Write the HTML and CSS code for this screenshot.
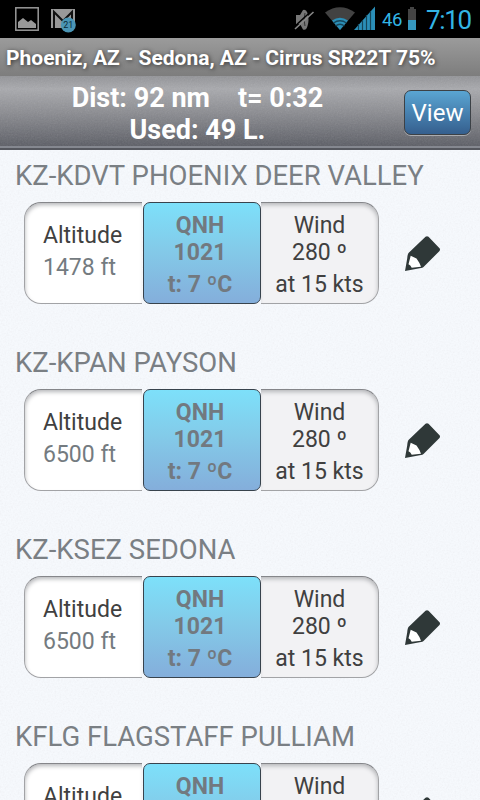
FILE: index.html
```html
<!DOCTYPE html>
<html lang="en">
<head>
    <meta charset="UTF-8">
    <meta name="viewport" content="width=device-width, initial-scale=1.0">
    <title>Flight plan weather</title>
    <link rel="stylesheet" href="styles.css">
</head>
<body>
    <svg class="symbols">
        <symbol id="pencil" viewBox="0 0 36 36">
            <path d="M20.500 .8Q22 -.3 23.500 .8L34.500 12.300Q35.500 13.500 34.500 15L18.500 31Q17.500 32 16 32L0 35 2.200 22.500Q2.500 17.500 4 16.500Z" fill="#2f3838"/>
            <path d="M5.700 19.700L11.500 22.500Q14.500 26.500 16 30.700L6.700 31.700Q5.500 29.200 3.500 28.300Z" fill="#fff"/>
        </symbol>
    </svg>

    <div class="status-bar">
        <svg class="notifications" width="90" height="38" viewBox="0 0 90 38">
            <rect x="15.8" y="7.8" width="22.4" height="22.4" fill="none" stroke="#999" stroke-width="1.5"/>
            <path d="M18 28V22L23 18 28 22 31 20 36 24V28Z" fill="#999"/>
            <rect x="51" y="9" width="24" height="19" fill="#999"/>
            <path d="M54 28V12L63 21 72 12V28" fill="none" stroke="#111" stroke-width="2"/>
            <circle cx="68.3" cy="25" r="7.5" fill="#4a95b5"/>
            <text x="68.3" y="28.2" class="mail-count">21</text>
        </svg>
        <svg class="indicators" width="90" height="38" viewBox="290 0 90 38">
            <path d="M296 15H300L303 10Q306 9 307.500 13Q309.500 20 307.500 26Q306 31 303 29.500L300 24H296Z" fill="#777"/>
            <path d="M305 13Q303 19.500 305 26" fill="none" stroke="#333" stroke-width="1"/>
            <path d="M294 27L312 10.500" stroke="#000" stroke-width="1.5"/>
            <path d="M295 29L313.500 12" stroke="#888" stroke-width="1.600"/>
            <path d="M325 12.500Q340 2 355 12.500L340 30Z" fill="#424242"/>
            <path d="M332 20.500Q340 15 348 20.500L340 30Z" fill="#2b8fb8"/>
            <path d="M333.500 23Q340 18.500 346.500 23M335.500 26Q340 22.500 344.500 26" fill="none" stroke="#16455a" stroke-width="1.300"/>
            <path d="M354 30L375 6.500V30Z" fill="#2b8fb8"/>
            <path d="M358.500 24V30M362.500 20V30M366.500 15V30M370.500 11V30" stroke="#15465a" stroke-width="1.200"/>
        </svg>
        <span class="battery-level">46</span>
        <svg class="battery" width="8" height="23" viewBox="0 0 8 23">
            <path d="M2 0H6V2H8V23H0V2H2Z" fill="#444"/>
            <path d="M0 13H8V23H0Z" fill="#3597be"/>
        </svg>
        <span class="clock">7:10</span>
    </div>

    <div class="title-bar"><span>Phoeniz, AZ - Sedona, AZ - Cirrus SR22T 75%</span></div>

    <div class="summary">
        <div class="totals">
            <div class="distance"><span>Dist: 92 nm</span><span>t= 0:32</span></div>
            <div class="fuel">Used: 49 L.</div>
        </div>
        <button class="view-btn">View</button>
    </div>

    <div class="waypoints">
        <div class="waypoint">
            <h2>KZ-KDVT PHOENIX DEER VALLEY</h2>
            <div class="row">
                <div class="card">
                    <div class="altitude">Altitude<span>1478 ft</span></div>
                    <div class="qnh">QNH<br>1021<span>t: 7 ºC</span></div>
                    <div class="wind">Wind<br>280 º<span>at 15 kts</span></div>
                </div>
                <svg class="edit"><use href="#pencil"/></svg>
            </div>
        </div>
        <div class="waypoint">
            <h2>KZ-KPAN PAYSON</h2>
            <div class="row">
                <div class="card">
                    <div class="altitude">Altitude<span>6500 ft</span></div>
                    <div class="qnh">QNH<br>1021<span>t: 7 ºC</span></div>
                    <div class="wind">Wind<br>280 º<span>at 15 kts</span></div>
                </div>
                <svg class="edit"><use href="#pencil"/></svg>
            </div>
        </div>
        <div class="waypoint">
            <h2>KZ-KSEZ SEDONA</h2>
            <div class="row">
                <div class="card">
                    <div class="altitude">Altitude<span>6500 ft</span></div>
                    <div class="qnh">QNH<br>1021<span>t: 7 ºC</span></div>
                    <div class="wind">Wind<br>280 º<span>at 15 kts</span></div>
                </div>
                <svg class="edit"><use href="#pencil"/></svg>
            </div>
        </div>
        <div class="waypoint">
            <h2>KFLG FLAGSTAFF PULLIAM</h2>
            <div class="row">
                <div class="card">
                    <div class="altitude">Altitude</div>
                    <div class="qnh">QNH</div>
                    <div class="wind">Wind</div>
                </div>
                <svg class="edit"><use href="#pencil"/></svg>
            </div>
        </div>
    </div>
</body>
</html>
```
FILE: styles.css
```css
* {
    box-sizing: border-box;
}
body {
    margin: 0;
    height: 800px;
    overflow: hidden;
    display: flex;
    flex-direction: column;
    font-family: Roboto, "Liberation Sans", sans-serif;
    background-color: #f2f5fa;
}
.symbols {
    position: absolute;
    width: 0;
    height: 0;
}
.status-bar {
    flex: none;
    height: 38px;
    display: flex;
    align-items: center;
    background: #000;
    color: #33b5e5;
}
.mail-count {
    font-size: 9px;
    text-anchor: middle;
    fill: #0b2a38;
}
.indicators {
    margin-left: auto;
}
.battery-level {
    width: 26px;
    margin-left: 2px;
    padding-top: 1px;
    font-size: 18.5px;
    letter-spacing: -0.5px;
}
.battery {
    margin: 0 10px 1px 0;
}
.clock {
    width: 54px;
    padding-top: 2px;
    font-size: 26px;
    letter-spacing: -1.3px;
}
.title-bar {
    flex: none;
    height: 38px;
    padding-left: 6px;
    line-height: 40px;
    font-size: 21px;
    font-weight: 700;
    color: #fff;
    white-space: nowrap;
    text-shadow: 1px 1px 4px #333;
    background: linear-gradient(#9b9b9b, #7d7d7d);
}
.summary {
    flex: none;
    height: 74px;
    display: flex;
    border-bottom: 2px solid #55575e;
    box-shadow: inset 0 -2px 0 #858890;
    background:
        url("data:image/svg+xml,%3Csvg xmlns='http://www.w3.org/2000/svg' width='100' height='100'%3E%3Cfilter id='n'%3E%3CfeTurbulence type='fractalNoise' baseFrequency='.7' numOctaves='2' stitchTiles='stitch'/%3E%3CfeColorMatrix type='saturate' values='0'/%3E%3C/filter%3E%3Crect width='100' height='100' filter='url(%23n)' opacity='.16'/%3E%3C/svg%3E"),
        linear-gradient(#929397 0, #a8a9ad 18%, #8b8c91 50%, #585a62 100%);
}
.totals {
    width: 395px;
    padding-top: 6px;
    font-size: 27px;
    font-weight: 700;
    line-height: 32px;
    color: #fff;
    text-align: center;
}
.distance {
    display: flex;
    justify-content: center;
    gap: 28px;
}
.view-btn {
    width: 67px;
    height: 45px;
    margin: 14px 0 0 9px;
    padding: 0;
    border: 1px solid #3c4146;
    border-radius: 7px;
    font-family: inherit;
    font-size: 24px;
    color: #fff;
    background: linear-gradient(#5aa5d3, #355f8e);
    box-shadow: 0 1px 0 #aaacb0;
}
.waypoints {
    flex: 1;
    overflow: hidden;
    background:
        url("data:image/svg+xml,%3Csvg xmlns='http://www.w3.org/2000/svg' width='100' height='100'%3E%3Cfilter id='n'%3E%3CfeTurbulence type='fractalNoise' baseFrequency='.6' numOctaves='2' stitchTiles='stitch'/%3E%3CfeColorMatrix type='saturate' values='0'/%3E%3C/filter%3E%3Crect width='100' height='100' filter='url(%23n)' opacity='.12'/%3E%3C/svg%3E"),
        #f8fbff;
}
.waypoint {
    height: 187px;
    padding-top: 8px;
}
.waypoint h2 {
    margin: 0 0 8px 15px;
    font-size: 27.5px;
    font-weight: 400;
    line-height: 36px;
    color: #7a7f84;
    white-space: nowrap;
}
.row {
    display: flex;
    align-items: center;
}
.card {
    width: 355px;
    height: 102px;
    margin-left: 24px;
    display: flex;
    font-size: 23px;
    line-height: 27px;
    color: #404040;
}
.card span {
    display: block;
    line-height: 37px;
}
.altitude {
    width: 118px;
    padding: 17px 0 0 18px;
    border: 1px solid #a2a3a6;
    border-top-color: #85868a;
    border-right: none;
    border-radius: 17px 0 0 17px;
    line-height: 32px;
    background: #fff;
    box-shadow: inset 1px 3px 4px -1px #b5b6b9;
}
.card .altitude span {
    line-height: 32px;
    color: #747b80;
}
.qnh {
    width: 118px;
    margin-left: 1px;
    padding: 9px 4px 0 0;
    border: 1px solid #38434d;
    border-radius: 7px;
    font-weight: 700;
    text-align: center;
    color: #727980;
    background: linear-gradient(#7de0fa, #83cbe9 45%, #84aedb);
}
.wind {
    width: 118px;
    padding-top: 9px;
    border: 1px solid #a2a3a6;
    border-top-color: #85868a;
    border-left: none;
    border-radius: 0 17px 17px 0;
    text-align: center;
    background: #f2f2f4;
    box-shadow: inset -1px 3px 4px -1px #b5b6b9;
}
.edit {
    width: 36px;
    height: 36px;
    margin: 2px 0 0 26px;
}
```
